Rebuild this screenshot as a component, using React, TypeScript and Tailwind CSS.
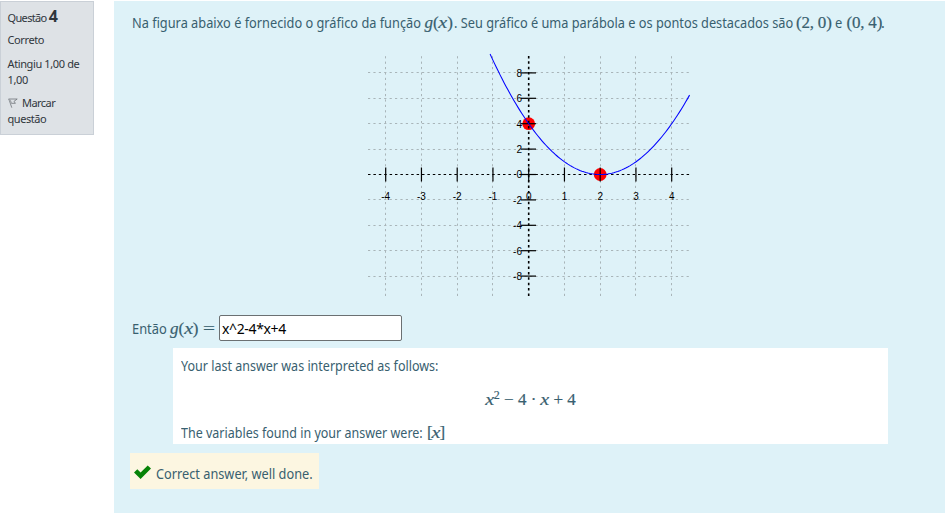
import type { ReactNode } from "react";

const sans = "font-['Noto_Sans','Open_Sans',sans-serif]";

function M({ children, className = "" }: { children: ReactNode; className?: string }) {
  return (
    <span
      className={`inline-block whitespace-pre font-['Liberation_Serif',serif] text-[17px] leading-[22px] [-webkit-text-stroke:0.2px_#38606f] ${className}`}
    >
      {children}
    </span>
  );
}

function X() {
  return <i className="mx-[0.5px] inline-block scale-x-[1.18]">x</i>;
}

function G() {
  return (
    <>
      <i className="inline-block">g</i>(<X />)
    </>
  );
}

/* Condensed text: the outer box keeps the drawn width in the flow. */
function T({ children, w, className }: { children: ReactNode; w: string; className: string }) {
  return (
    <span className={`inline-block ${w}`}>
      <span className={`inline-block origin-left whitespace-pre ${className}`}>{children}</span>
    </span>
  );
}

const X0 = 160.7;
const Y0 = 120.5;
const UX = 35.75;
const UY = 12.7;
const px = (x: number) => X0 + x * UX;
const py = (y: number) => Y0 - y * UY;
const xs = [-4, -3, -2, -1, 0, 1, 2, 3, 4];
const ys = [8, 6, 4, 2, 0, -2, -4, -6, -8];

function Graph() {
  const pts: string[] = [];
  for (let i = 0; i <= 100; i++) {
    const x = -1.08 + (5.58 * i) / 100;
    pts.push(`${px(x).toFixed(2)},${py((x - 2) ** 2).toFixed(2)}`);
  }
  return (
    <svg width="322" height="242" viewBox="0 0 322 242" className="block overflow-visible" fontFamily="Liberation Sans, Arial, sans-serif" fontSize="10">
      <g stroke="#a9b5b9" strokeWidth="1" strokeDasharray="2.2 3.2">
        {xs.filter((x) => x !== 0).map((x) => (
          <line key={x} x1={Math.floor(px(x)) + 0.5} x2={Math.floor(px(x)) + 0.5} y1="242" y2="1" />
        ))}
        {ys.filter((y) => y !== 0).map((y) => (
          <line key={y} x1="0" x2="322" y1={Math.round(py(y) - 0.5) + 0.5} y2={Math.round(py(y) - 0.5) + 0.5} />
        ))}
      </g>
      <circle cx={px(0)} cy={py(4)} r="6.4" fill="#f00" />
      <circle cx={px(2)} cy={py(0)} r="6.4" fill="#f00" />
      <g fill="#000">
        {xs.map((x) => (
          <text key={x} x={px(x)} y="146" textAnchor="middle">{x}</text>
        ))}
        {ys.map((y) => (
          <text key={y} x="154" y={py(y) + 3.8} textAnchor="end">{y}</text>
        ))}
      </g>
      <g stroke="#000">
        <line x1="0" x2="322" y1="120.5" y2="120.5" strokeWidth="1.2" strokeDasharray="2.5 2.9" />
        <line x1="160.7" x2="160.7" y1="242" y2="1" strokeWidth="1.6" strokeDasharray="2.5 2.9" />
        {xs.map((x) => (
          <line key={x} x1={px(x)} x2={px(x)} y1="113.5" y2="127.5" strokeWidth="1.2" />
        ))}
        {ys.map((y) => (
          <line key={y} x1="153" x2="168" y1={py(y)} y2={py(y)} strokeWidth="1.2" />
        ))}
      </g>
      <polyline points={pts.join(" ")} fill="none" stroke="#00f" strokeWidth="1.05" />
    </svg>
  );
}

export default function App() {
  return (
    <div className={`flex h-[514px] w-[945px] overflow-hidden bg-white pt-px text-[14px] text-[#38606f] ${sans}`}>
      <aside className="h-[134px] w-[94px] shrink-0 border border-[#cad0d7] bg-[#dee2e6] pl-[6.5px] pt-[3px] text-[11px] leading-4 tracking-[-0.38px] text-[#30363c]">
        <div className="h-[27px] leading-[22px]">
          <span className="tracking-[-0.65px]">Questão </span>
          <span className="text-[16px] font-bold">4</span>
        </div>
        <div className="mb-2">Correto</div>
        <div className="mb-[7px]">
          Atingiu 1,00 de
          <br />
          1,00
        </div>
        <div>
          <svg width="10" height="10" viewBox="0 0 10 10" className="mr-[4.5px] inline-block align-[-1px]" fill="none" stroke="#6f7479">
            <path d="M0.5 1H9.2L6 3.4L7.4 5.3H3.2M0.8 1L3.8 9.7" strokeWidth="0.8" />
            <path d="M1.7 1.6L3.4 5.2" strokeWidth="1.5" stroke="#a2a6aa" />
          </svg>
          <span className="tracking-[-0.55px]">Marcar</span>
          <br />
          <span className="tracking-[-0.45px]">questão</span>
        </div>
      </aside>
      <main className="ml-5 h-[512px] w-[831px] bg-[#def2f8]">
        <div className="flex h-[53px] items-start whitespace-pre pl-[18px] pt-[11px] leading-[22px]">
          <T w="w-[292.5px]" className="scale-x-[0.912]">Na figura abaixo é fornecido o gráfico da função</T>
          <M className="w-[29px]"><G /></M>
          <T w="w-[342.5px]" className="scale-x-[0.911]">. Seu gráfico é uma parábola e os pontos destacados são</T>
          <M className="w-[39px] tracking-[-0.2px]">(2, 0)</M>
          <T w="w-[11.5px]" className="scale-x-[0.92]">e</T>
          <M className="w-[34.5px] tracking-[-0.2px]">(0, 4)</M>
          <span>.</span>
        </div>
        <div className="pl-[254px]">
          <Graph />
        </div>
        <div className="mt-[18px] flex h-[28px] items-center whitespace-pre pl-[18px] leading-[22px]">
          <T w="w-[38px]" className="scale-x-[0.92] translate-y-px">Então</T>
          <M className="w-[32.5px] shrink-0 translate-y-px"><G /></M>
          <M className="w-[16.5px] shrink-0 translate-y-px"><span className="inline-block origin-left scale-x-[1.25]">=</span></M>
          <input
            readOnly
            value="x^2-4*x+4"
            className="h-[26px] w-[183px] rounded-[2px] border border-[#6b7072] bg-white px-[2px] text-[14px] tracking-[-0.35px] text-black outline-none"
          />
        </div>
        <section className="ml-[59px] mt-[6px] h-[96px] w-[715px] bg-white px-[8px] pt-[7px] leading-[22px]">
          <p className="h-[22px]">
            <T w="w-[258px]" className="scale-x-[0.894]">Your last answer was interpreted as follows:</T>
          </p>
          <div className="mt-[12px] h-[22px] text-center">
            <M><X /><sup className="text-[12px]">2</sup> − 4 · <X /> + 4</M>
          </div>
          <p className="mt-[11px] flex h-[22px]">
            <T w="w-[246px]" className="scale-x-[0.893]">The variables found in your answer were:</T>
            <M className="tracking-[-0.9px]">[<X />]</M>
          </p>
        </section>
        <div className="ml-[16px] mt-[9px] flex h-[36px] w-[189px] items-center bg-[#fcf6e1] pl-[4px]">
          <svg width="17" height="14" viewBox="0 0 17 14" className="mr-[5px] mt-[2px] shrink-0">
            <path d="M0 7.5L3.3 4.3L6.6 7.4L13.7 0.4L17 3.5L6.6 14Z" fill="#078307" />
          </svg>
          <T w="w-[158px]" className="scale-x-[0.91] pt-[5px]">Correct answer, well done.</T>
        </div>
      </main>
    </div>
  );
}
